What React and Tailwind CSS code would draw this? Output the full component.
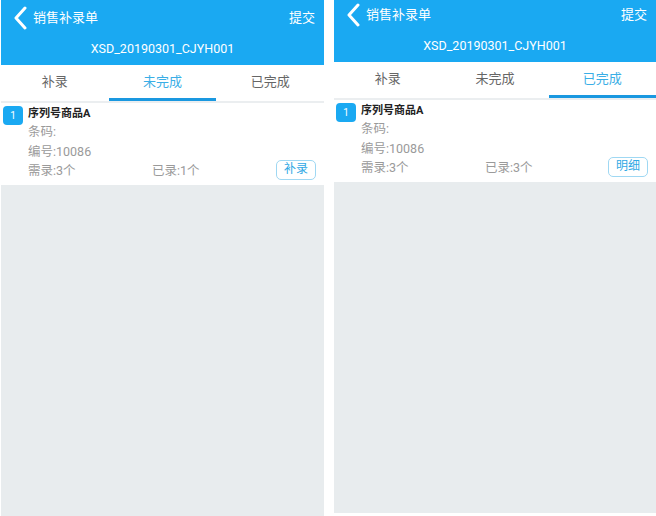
const FONT = { fontFamily: 'Roboto, "Noto Sans CJK SC", "Noto Sans", sans-serif' };

const Panel = ({ active, headerH, done, btn, className = '' }) => {
  const tabs = ['补录', '未完成', '已完成'];
  return (
    <div className={`flex flex-col h-full bg-[#e8ecee] ${className}`}>
      {/* Header */}
      <div className="bg-[#1aa9f2] text-white flex flex-col" style={{ height: headerH }}>
        <div className="flex items-center h-[36px] pl-[11px] pr-[9px]">
          <svg width="16" height="24" viewBox="0 0 16 24" className="shrink-0">
            <polyline points="13,2 4,12 13,22" fill="none" stroke="white" strokeWidth="3" strokeLinecap="round" strokeLinejoin="round" />
          </svg>
          <span className="ml-[5px] text-[13px]">销售补录单</span>
          <span className="ml-auto text-[13px]">提交</span>
        </div>
        <div className="flex-1 flex items-center justify-center text-[12.5px] pb-[2px]">
          XSD_20190301_CJYH001
        </div>
      </div>

      {/* Tabs */}
      <div className="bg-white flex h-[36px]">
        {tabs.map((t, i) => (
          <div key={t} className="flex-1 flex flex-col">
            <div className={`flex-1 flex items-center justify-center text-[13px] ${i === active ? 'text-[#3aaee6]' : 'text-[#666]'}`}>
              {t}
            </div>
            <div className={`h-[3px] ${i === active ? 'bg-[#1a98e0]' : 'bg-white'}`} />
          </div>
        ))}
      </div>
      <div className="h-[2px] bg-[#ebeef0]" />

      {/* Item */}
      <div className="bg-white h-[82px] flex pl-[2px] pr-[8px] pt-[3px]">
        <div className="w-[20px] h-[19px] rounded-[4px] bg-[#1aa9f2] text-white text-[10px] flex items-center justify-center shrink-0">
          1
        </div>
        <div className="flex-1 ml-[5px] flex flex-col -mt-[1px]">
          <div className="text-[11px] font-bold text-[#222] leading-[17px]">序列号商品A</div>
          <div className="text-[12.5px] text-[#9a9a9a] leading-[20px]">条码:</div>
          <div className="text-[12.5px] text-[#9a9a9a] leading-[19px]">编号:10086</div>
          <div className="flex items-center text-[12.5px] text-[#9a9a9a] leading-[19px]">
            <span className="w-[124px]">需录:3个</span>
            <span>已录:{done}个</span>
            <span className="ml-auto -mt-[2px] h-[20px] w-[40px] border border-[#9fd8f3] rounded-[5px] text-[#2fa8e4] text-[12px] flex items-center justify-center">
              {btn}
            </span>
          </div>
        </div>
      </div>
    </div>
  );
};

export default function App() {
  return (
    <div className="w-[656px] h-[516px] bg-white flex overflow-hidden" style={FONT}>
      <Panel className="w-[323px] ml-[1px]" active={1} headerH={65} done={1} btn="补录" />
      <Panel className="w-[322px] ml-[10px] -mt-[3px] h-[519px]" active={2} headerH={65} done={3} btn="明细" />
    </div>
  );
}
